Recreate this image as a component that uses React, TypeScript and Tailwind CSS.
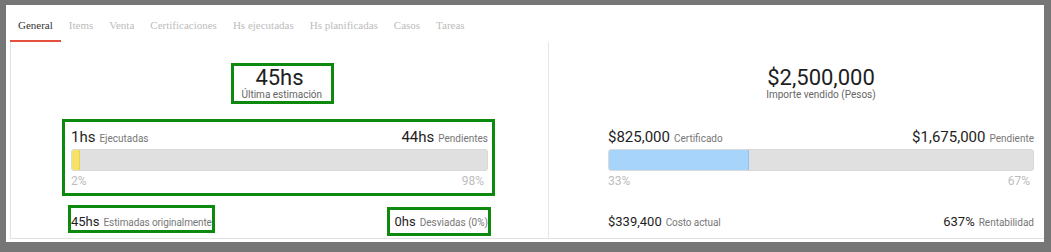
import React from "react";

const GREEN = "border-[3px] border-[#0d8a0d]";
const NONE = "border-[3px] border-transparent";

const tabs = ["General", "Items", "Venta", "Certificaciones", "Hs ejecutadas", "Hs planificadas", "Casos", "Tareas"];

function Bar({ pct, color }: { pct: number; color: string }) {
  return (
    <div className="h-[22px] w-full rounded-[3px] bg-[#e0e0e0] border border-[#dadada] overflow-hidden flex">
      <div className={`h-full ${color}`} style={{ width: `${pct}%` }} />
    </div>
  );
}

function Column({
  boxed,
  big,
  bigLabel,
  leftVal,
  leftLabel,
  rightVal,
  rightLabel,
  pct,
  fill,
  bl,
  bll,
  br,
  brl,
  pad,
  border,
}: {
  boxed: boolean;
  big: string;
  bigLabel: string;
  leftVal: string;
  leftLabel: string;
  rightVal: string;
  rightLabel: string;
  pct: number;
  fill: string;
  bl: string;
  bll: string;
  br: string;
  brl: string;
  pad: string;
  border: string;
}) {
  const B = boxed ? GREEN : NONE;
  return (
    <div className={`flex flex-col h-full ${pad} ${border}`}>
      <div className="mt-[21px] flex justify-center">
        <div className={`${B} ${boxed ? "w-[103px]" : ""} pl-[8px] pr-[13px] pt-[1px] text-center ml-[5px]`}>
          <div className="text-[22px] leading-[22px] text-[#1e1e1e] whitespace-nowrap">{big}</div>
          <div className="text-[10px] leading-[12px] text-[#666] whitespace-nowrap">{bigLabel}</div>
        </div>
      </div>
      <div className={`${B} mt-[15px] -ml-[9px] -mr-[7px] pl-[6px] pr-[4px] pt-[6px] pb-[5px]`}>
        <div className="flex justify-between items-baseline h-[18px] leading-[18px] mb-[3px]">
          <div className="whitespace-nowrap">
            <span className="text-[15px] text-[#1e1e1e]">{leftVal}</span>
            <span className="text-[10px] text-[#777] ml-[4px]">{leftLabel}</span>
          </div>
          <div className="whitespace-nowrap">
            <span className="text-[15px] text-[#1e1e1e]">{rightVal}</span>
            <span className="text-[10px] text-[#777] ml-[4px]">{rightLabel}</span>
          </div>
        </div>
        <Bar pct={pct} color={fill} />
        <div className="flex justify-between mt-[3px] text-[12px] leading-[14px] text-[#bdbdbd]">
          <span>{pct}%</span>
          <span className="pr-[4px]">{100 - pct}%</span>
        </div>
      </div>
      <div className="mt-[9px] flex justify-between items-start">
        <div className={`${B} -ml-[3px] h-[28px] pt-[4px] leading-[18px] whitespace-nowrap`}>
          <span className="text-[13px] text-[#1e1e1e]">{bl}</span>
          <span className="text-[10px] tracking-[-0.1px] text-[#777] ml-[4px]">{bll}</span>
        </div>
        <div className={`${B} -mr-[3px] mt-[2px] h-[29px] pl-[5px] pt-[2px] leading-[18px] whitespace-nowrap`}>
          <span className="text-[13px] text-[#1e1e1e]">{br}</span>
          <span className="text-[10px] text-[#777] ml-[4px]">{brl}</span>
        </div>
      </div>
    </div>
  );
}

export default function App() {
  return (
    <div className="h-[252px] w-[1051px] bg-[#767676] pt-[5px] pl-[6px] pr-[7px] pb-[10px] overflow-hidden">
      <div className="h-[237px] bg-white pl-[4px] flex flex-col">
        <div className="flex font-['Liberation_Serif',serif] text-[11px] leading-[13px]">
          {tabs.map((t, i) => (
            <div
              key={t}
              className={`px-[8px] pt-[14px] pb-[8px] border-b-2 whitespace-nowrap ${
                i === 0 ? "border-[#e5503c] text-[#333]" : "border-transparent text-[#bcbcbc]"
              }`}
            >
              {t}
            </div>
          ))}
        </div>
        <div className="h-[197px] border-l border-b border-[#e2e2e2] flex font-[Roboto,sans-serif]">
          <div className="w-[538px] shrink-0 h-full">
            <Column
              boxed
              big="45hs"
              bigLabel="Última estimación"
              leftVal="1hs"
              leftLabel="Ejecutadas"
              rightVal="44hs"
              rightLabel="Pendientes"
              pct={2}
              fill="bg-[#f6e266] border-r border-[#e8d350]"
              bl="45hs"
              bll="Estimadas originalmente"
              br="0hs"
              brl="Desviadas (0%)"
              pad="pl-[60px] pr-[60px]"
              border="border-r border-[#e6e6e6]"
            />
          </div>
          <div className="flex-1 h-full">
            <Column
              boxed={false}
              big="$2,500,000"
              bigLabel="Importe vendido (Pesos)"
              leftVal="$825,000"
              leftLabel="Certificado"
              rightVal="$1,675,000"
              rightLabel="Pendiente"
              pct={33}
              fill="bg-[#a7d4fb] border-r border-[#8ec3f2]"
              bl="$339,400"
              bll="Costo actual"
              br="637%"
              brl="Rentabilidad"
              pad="pl-[59px] pr-[10px]"
              border=""
            />
          </div>
        </div>
      </div>
    </div>
  );
}
